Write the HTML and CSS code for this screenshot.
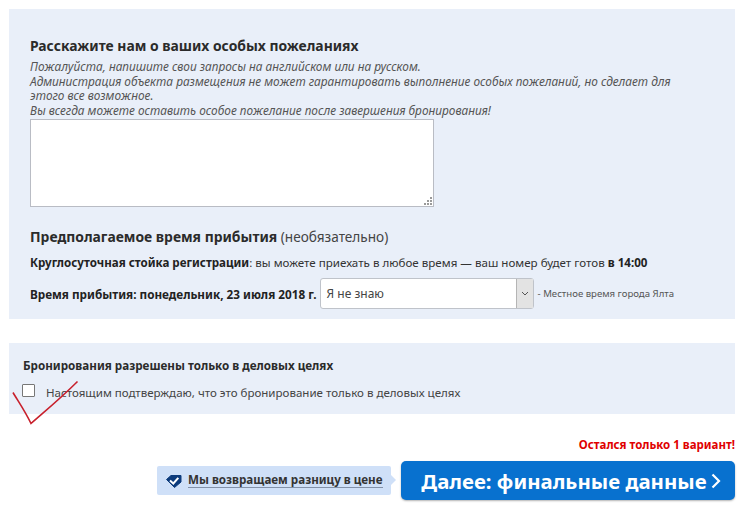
FILE: index.html
```html
<!DOCTYPE html>
<html lang="ru">
<head>
<meta charset="utf-8">
<title>Бронирование</title>
<link rel="stylesheet" href="styles.css">
</head>
<body>
<main class="page">
  <section class="panel panel-requests">
    <h2 class="title">Расскажите нам о ваших особых пожеланиях</h2>
    <p class="note">Пожалуйста, напишите свои запросы на английском или на русском.<br>Администрация объекта размещения не может гарантировать выполнение особых пожеланий, но сделает для этого все возможное.<br>Вы всегда можете оставить особое пожелание после завершения бронирования!</p>
    <div class="textarea"><svg class="grip" viewBox="0 0 9 9" width="9" height="9"><g fill="#9a9a9a"><rect x="6" y="0" width="2" height="2"/><rect x="3" y="3" width="2" height="2"/><rect x="6" y="3" width="2" height="2"/><rect x="0" y="6" width="2" height="2"/><rect x="3" y="6" width="2" height="2"/><rect x="6" y="6" width="2" height="2"/></g></svg></div>
    <h2 class="title title-arrival">Предполагаемое время прибытия <span class="optional">(необязательно)</span></h2>
    <p class="desk"><b>Круглосуточная стойка регистрации</b>: вы можете приехать в любое время — ваш номер будет готов <b>в 14:00</b></p>
    <div class="arrival-row">
      <b class="arrival-label">Время прибытия: понедельник, 23 июля 2018 г.</b>
      <div class="select">
        <span class="select-value">Я не знаю</span>
        <span class="select-arrow"><svg viewBox="0 0 8 5" width="8" height="5"><path d="M1 1l3 3 3-3" fill="none" stroke="#555" stroke-width="1"/></svg></span>
      </div>
      <span class="local-time">- Местное время города Ялта</span>
    </div>
  </section>

  <section class="panel panel-business">
    <h3 class="business-title">Бронирования разрешены только в деловых целях</h3>
    <label class="business-check"><span class="checkbox"></span><span class="check-text">Настоящим подтверждаю, что это бронирование только в деловых целях</span></label>
    <svg class="red-tick" viewBox="0 0 70 46" width="70" height="46"><path d="M1 12.500C6 21 13 31 19 43.500C32 32 48 19 65.500 1.500" fill="none" stroke="#c8202c" stroke-width="1.600"/></svg>
  </section>

  <p class="warning">Остался только 1 вариант!</p>
  <div class="actions">
    <div class="promise">
      <svg class="promise-icon" viewBox="0 0 16 14" width="16" height="14"><path d="M0.500 5.500L5 1.500H15V8L8.500 13.500Z" fill="#0c3b7c" stroke="#0c3b7c" stroke-linejoin="round"/><path d="M4 6.500L7.300 9.500L12.300 3.800" fill="none" stroke="#fff" stroke-width="2"/></svg>
      <span class="promise-text">Мы возвращаем разницу в цене</span>
    </div>
    <button class="next" type="button">Далее: финальные данные<svg viewBox="0 0 10 16" width="10" height="16"><path d="M1.500 1.500L8 8l-6.500 6.500" fill="none" stroke="#fff" stroke-width="2.200"/></svg></button>
  </div>
</main>
</body>
</html>
```

FILE: styles.css
```css
* { box-sizing: border-box; }
html, body { margin: 0; padding: 0; background: #fff; }
body {
  font-family: "Noto Sans", "Open Sans", sans-serif;
  color: #333;
  font-size: 11.600px;
  overflow: hidden;
}
.page { width: 745px; height: 515px; padding: 9px 10px 0 9px; }
.panel { background: #e9eff9; }
.panel-requests { height: 310px; padding: 27px 21px 0; }
.title { margin: 0; font-size: 13.900px; line-height: 20px; font-weight: 700; color: #2b2b2b; }
.note { margin: 3px 0 0; font-size: 11.850px; line-height: 14.600px; font-style: italic; color: #555; width: 660px; }
.textarea { position: relative; width: 404px; height: 88px; margin-top: 2px; background: #fff; border: 1px solid #b9bcc4; }
.grip { position: absolute; right: 0; bottom: 0; }
.title-arrival { margin-top: 20px; }
.optional { font-weight: 400; font-size: 13.600px; color: #444; }
.desk { margin: 7px 0 0; line-height: 18px; color: #333; }
.desk b, .arrival-label { color: #222; }
.arrival-row { display: flex; align-items: center; margin-top: 6px; }
.arrival-label { font-size: 11.720px; white-space: nowrap; margin-right: 3px; }
.select { display: flex; flex: none; width: 214px; height: 31px; background: #fff; border: 1px solid #bfc3ca; border-radius: 3px; }
.select-value { flex: 1; padding: 6px 5px 0 6px; font-size: 12px; line-height: 18px; color: #444; }
.select-arrow { width: 17px; display: flex; align-items: center; justify-content: center; background: #e3e3e3; border-left: 1px solid #b5b5b5; }
.local-time { margin-left: 4px; font-size: 9.600px; color: #555; }
.panel-business { position: relative; height: 71px; margin-top: 24px; padding: 14px 14px 0; }
.business-title { margin: 0; font-size: 11.660px; line-height: 18px; font-weight: 700; color: #2b2b2b; }
.business-check { display: flex; align-items: flex-start; gap: 10px; margin-top: 7px; font-size: 11.550px; line-height: 18px; color: #444; }
.checkbox { width: 13px; height: 13px; margin: 2px 1px 0 -1px; background: #fff; border: 1px solid #777; border-radius: 1px; }
.check-text { padding-top: 2px; }
.red-tick { position: absolute; left: 3px; top: 37px; }
.warning { margin: 23px 0 0; text-align: right; font-size: 11.500px; line-height: 16px; font-weight: 700; color: #e00000; }
.actions { display: flex; align-items: center; justify-content: flex-end; margin-top: 8px; }
.promise { position: relative; display: flex; align-items: center; gap: 6px; width: 234px; height: 29px; padding-left: 9px; margin-right: 10px; background: #cfe0f8; border-radius: 2px; }
.promise::after { content: ""; position: absolute; right: -5px; top: 9px; border-left: 5px solid #cfe0f8; border-top: 5px solid transparent; border-bottom: 5px solid transparent; }
.promise-text { font-size: 11.640px; font-weight: 700; line-height: 14px; color: #333; border-bottom: 1px solid #8291a8; }
.next { display: flex; align-items: center; justify-content: center; gap: 4px; flex: none; width: 334px; height: 39px; padding: 0 0 0 6px; border: 0; border-radius: 5px; background: #0871cf; box-shadow: 0 1px 2px rgba(0,0,0,.3); color: #fff; font-family: inherit; font-size: 20.400px; font-weight: 700; }
```
